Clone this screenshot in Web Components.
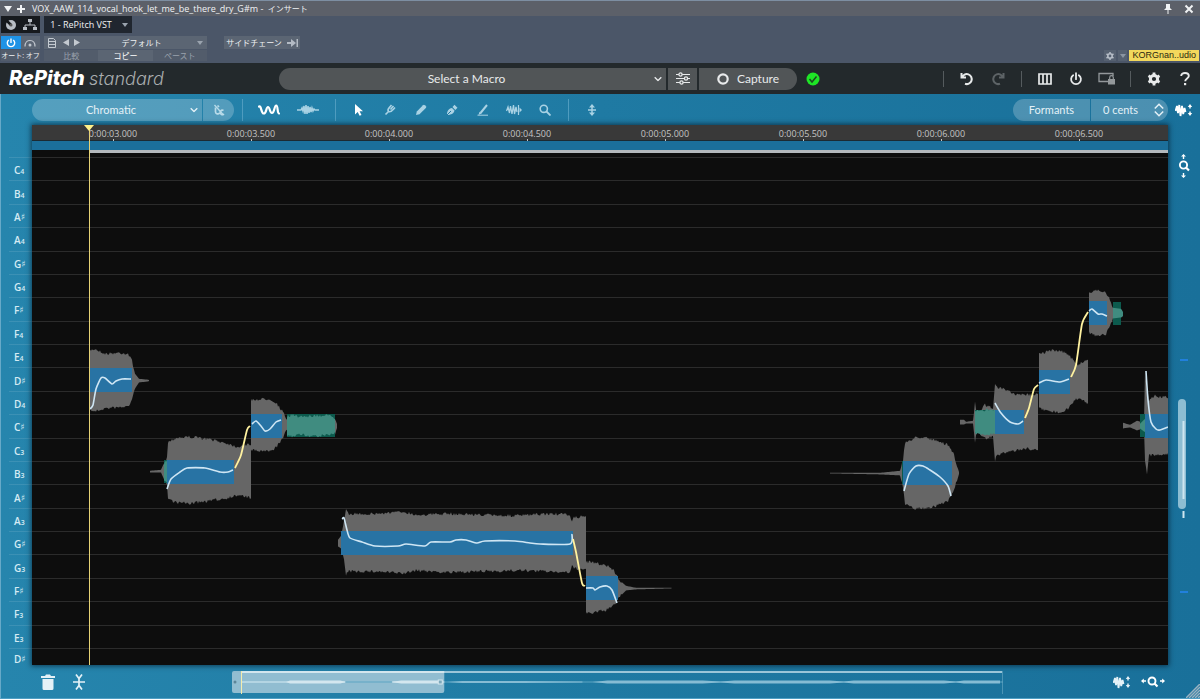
<!DOCTYPE html>
<html lang="ja">
<head>
<meta charset="utf-8">
<title>RePitch standard</title>
<style>
  body {
    margin: 0;
    height: 100vh;
    overflow: hidden;
    font-family: "Open Sans", "Noto Sans CJK JP", sans-serif;
  }
</style>
</head>
<body>
<repitch-app>
  <host-bar slot="host"></host-bar>
  <plugin-header slot="header"></plugin-header>
  <edit-toolbar slot="tools"></edit-toolbar>
  <note-keys slot="keys"></note-keys>
  <pitch-editor slot="editor"></pitch-editor>
  <zoom-rail slot="rail"></zoom-rail>
  <overview-bar slot="overview"></overview-bar>
</repitch-app>

<script>
const ICONS = {
  triangle: [8, 6, `<path d="M0 0h8L4 6z" fill="currentColor"/>`],
  triSmall: [6, 4, `<path d="M0 0h6L3 4z" fill="currentColor"/>`],
  triLeft: [6, 7, `<path d="M6 0v7L0 3.500z" fill="currentColor"/>`],
  triRight: [6, 7, `<path d="M0 0v7l6-3.500z" fill="currentColor"/>`],
  plus: [10, 10, `<path d="M5 1v8M1 5h8" stroke="currentColor" stroke-width="2"/>`],
  pin: [8, 10, `<path d="M2 0h4v4l2 2H0l2-2zM3.500 6h1v4h-1z" fill="currentColor"/>`],
  close: [10, 10, `<path d="M1.500 1.500l7 7M8.500 1.500l-7 7" stroke="currentColor" stroke-width="2"/>`],
  knob: [12, 12, `<circle cx="6" cy="6" r="5" fill="currentColor"/><path d="M6 6L1 1" stroke="#15181b" stroke-width="2.500"/><circle cx="6" cy="6" r="1.500" fill="#555"/>`],
  tree: [14, 12, `<path d="M7 2v4M2 9V6h10v3" fill="none" stroke="currentColor"/><path d="M5 0h4v3H5zM0 8h4v3H0zM10 8h4v3h-4z" fill="currentColor"/>`],
  powerSmall: [10, 10, `<path d="M2.800 2a3.700 3.700 0 1 0 4.400 0M5 .4v4.600" fill="none" stroke="currentColor" stroke-width="1.400"/>`],
  power: [14, 14, `<path d="M4.200 3.200a4.900 4.900 0 1 0 5.600 0M7 1.200v6" fill="none" stroke="currentColor" stroke-width="1.800" stroke-linecap="round"/>`],
  bypass: [12, 8, `<path d="M1 7.500C1 3 3.500 1.500 6 1.500S11 3 11 7.500" fill="none" stroke="currentColor" stroke-width="1.200"/><circle cx="6" cy="6" r="1.500" fill="currentColor"/>`],
  sheet: [8, 10, `<path d="M.5.5h5l2 2v7h-7zM1 3.500h6M1 6.500h6" fill="none" stroke="currentColor"/>`],
  routeIn: [11, 8, `<path d="M0 3h4V0l5 4-5 4V5H0zM9.500 0H11v8H9.500z" fill="currentColor"/>`],
  chevron: [8, 5, `<path d="M.7.7L4 4 7.300.7" fill="none" stroke="currentColor" stroke-width="1.300"/>`],
  sliders: [14, 13, `<path d="M0 2.500h14M0 6.500h14M0 10.500h14" stroke="currentColor" stroke-width="1.200"/><g fill="#515557" stroke="currentColor" stroke-width="1.300"><circle cx="4.500" cy="2.500" r="1.600"/><circle cx="10" cy="6.500" r="1.600"/><circle cx="5.500" cy="10.500" r="1.600"/></g>`],
  ring: [12, 12, `<circle cx="6" cy="6" r="4.700" fill="none" stroke="currentColor" stroke-width="2.200"/>`],
  check: [14, 14, `<circle cx="7" cy="7" r="6.500" fill="#1ee526"/><path d="M3.500 7l2.500 3 4.500-5.500" fill="none" stroke="#1b4a20" stroke-width="1.500"/>`],
  undo: [14, 14, `<path d="M1.500 1v4.500H6M2 5.500A5 5 0 1 1 5 11.800" fill="none" stroke="currentColor" stroke-width="2"/>`],
  redo: [14, 14, `<path d="M12.500 1v4.500H8M12 5.500A5 5 0 1 0 9 11.800" fill="none" stroke="currentColor" stroke-width="2"/>`],
  columns: [14, 12, `<path d="M1 1h12v10H1zM5 1v10M9 1v10" fill="none" stroke="currentColor" stroke-width="1.700"/>`],
  screenLock: [18, 13, `<path d="M10 9.500H1V1.500h14V4" fill="none" stroke="currentColor" stroke-width="1.300"/><path d="M10 7h7v5.500h-7z" fill="currentColor"/><path d="M11.700 7V5.500a1.800 1.800 0 0 1 3.600 0V7" fill="none" stroke="currentColor" stroke-width="1.200"/>`],
  gear: [14, 14, `<circle cx="7" cy="7" r="3.600" fill="none" stroke="currentColor" stroke-width="3"/><path d="M7 .6v2.500M7 10.900v2.500M1.500 3.800l2.200 1.300M10.300 8.900l2.200 1.300M1.500 10.200l2.200-1.300M10.300 5.100l2.200-1.300" stroke="currentColor" stroke-width="2.800"/>`],
  gearSmall: [8, 8, `<circle cx="4" cy="4" r="2.200" fill="none" stroke="currentColor" stroke-width="1.600"/><path d="M4 0v1.600M4 6.400V8M.5 2l1.400.8M6.100 5.200l1.400.8M.5 6l1.400-.8M6.100 2.800L7.500 2" stroke="currentColor" stroke-width="1.500"/>`],
  help: [10, 14, `<path d="M1.200 4C1.200 2 2.800 1 5 1s3.800 1 3.800 3c0 2.400-3.600 2.500-3.600 5.200" fill="none" stroke="currentColor" stroke-width="1.900"/><path d="M4 11h2.200v2.200H4z" fill="currentColor"/>`],
  scaleOff: [12, 12, `<path d="M1.500 1l9 10" stroke="currentColor" stroke-width="1.300"/><path d="M2.500 3.500v4.500a2.200 2.200 0 0 0 4 1M4.500 1.500L6 3M10.500 6.500a2.200 2.200 0 1 0 .5 3.500" fill="none" stroke="currentColor" stroke-width="1.700"/>`],
  pitchWave: [22, 12, `<path d="M1 2.500C3.500 1.500 3 9.500 5.800 9.500S8 3 10 3s1.500 6 4 6 2.200-7.500 4.200-7.500S19 9 21 9.500" fill="none" stroke="currentColor" stroke-width="2.200" stroke-linecap="round"/>`],
  audioWave: [22, 12, `<path d="M0 6h4l1-2 1 3 1-5 1 8 1-9 1 9 1-8 1 7 1-6 1 5 1-4 1 3 1-2 1 1h5" fill="none" stroke="currentColor" stroke-width="1.500"/>`],
  pointer: [10, 12, `<path d="M1 0v10.500l2.700-2.400 1.900 3.700 1.900-.9-1.900-3.600H9z" fill="currentColor"/>`],
  fork: [12, 12, `<path d="M1.500 10.500L5 7M4.500 7.500C2.500 5 5.500 4 7.500 1M4.500 7.500c2.500 1.500 4-1.500 6.500-4M6.500 5.500l3-3.500" fill="none" stroke="currentColor" stroke-width="1.600"/>`],
  pencil: [12, 12, `<path d="M1 11l.8-3.500L8 1.300a1.300 1.300 0 0 1 1.800 0l1 1a1.300 1.300 0 0 1 0 1.800L4.500 10.300z" fill="currentColor"/>`],
  pen: [12, 12, `<path d="M1 11C1 7 2.500 4.500 6 4l2.500 2.500C8 9.500 5 11 1 11zM6.500 3L8.500.8l3 3L9.300 6z" fill="currentColor"/><path d="M1 11l4-4" stroke="#2079a3"/>`],
  line: [12, 12, `<path d="M3.500 9L10 1" stroke="currentColor" stroke-width="2"/><path d="M.5 11.200h10.500" stroke="currentColor"/><path d="M2.500 7.800l2 1.700L1.500 11z" fill="currentColor"/>`],
  stretch: [16, 12, `<path d="M.5 7L2 3l1.500 6 1-7 1.500 8L7.500 1l1 9L10 3l1 5" fill="none" stroke="currentColor" stroke-width="1.300"/><path d="M12.500 1v10" stroke="currentColor" stroke-width="1.200"/><path d="M13.500 3.500L16 6l-2.500 2.500z" fill="currentColor"/>`],
  search: [12, 12, `<circle cx="4.800" cy="4.800" r="3.600" fill="none" stroke="currentColor" stroke-width="1.600"/><path d="M7.500 7.500l4 4" stroke="currentColor" stroke-width="1.800"/>`],
  pitchSnap: [8, 12, `<path d="M4 1v10M0 6h8" stroke="currentColor" stroke-width="1.500"/><path d="M4 0l3 3.500H1zM4 12l3-3.500H1z" fill="currentColor"/>`],
  stepper: [10, 14, `<path d="M.8 5.500L5 1.200l4.200 4.300M.8 8.500L5 12.800l4.200-4.300" fill="none" stroke="currentColor" stroke-width="1.500"/>`],
  waveHeight: [18, 14, `<path d="M.5 8L2 3l1 7L4.300 2l1.200 11L7 3l1.200 8L9.500 5l1 4" fill="none" stroke="currentColor" stroke-width="1.800"/><path d="M15 1l2.200 3h-1.500v1.500h-1.400V4h-1.500zM15 13l2.200-3h-1.500V8.500h-1.400V10h-1.500z" fill="currentColor"/>`],
  zoomVertical: [12, 24, `<circle cx="5.500" cy="11" r="3.600" fill="none" stroke="currentColor" stroke-width="1.900"/><path d="M8 13.500l3 3" stroke="currentColor" stroke-width="2.200"/><path d="M5.500 0L8 2.500H6.200V5H4.800V2.500H3zM5.500 24L8 21.500H6.200V19H4.800v2.500H3z" fill="currentColor"/>`],
  zoomHorizontal: [24, 12, `<circle cx="11" cy="5" r="3.500" fill="none" stroke="currentColor" stroke-width="1.900"/><path d="M13.500 7.500l3 3" stroke="currentColor" stroke-width="2.200"/><path d="M0 5l2.800-2.500v1.800H5v1.400H2.800v1.800zM24 5l-2.800-2.500v1.800H19v1.400h2.200v1.800z" fill="currentColor"/>`],
  trash: [14, 16, `<path d="M0 2h4l1-1.500h4L10 2h4v2H0zM1.500 5h11v9.500a1.500 1.500 0 0 1-1.500 1.500H3a1.500 1.500 0 0 1-1.500-1.500z" fill="currentColor"/>`],
  collapse: [12, 16, `<path d="M0 8h12M3 .5L6 4.500 9 .5M6 4v8M3 15.500l3-4 3 4" fill="none" stroke="currentColor" stroke-width="1.700"/>`],
  grip: [14, 14, `<path d="M0 14L14 0M3 14L14 3M6 14l8-8M9 14l5-5M12 14l2-2" stroke="#9bb3c2" stroke-width="1.500"/>`]
};

class RpIcon extends HTMLElement {
  constructor() {
    super();
    this.attachShadow({ mode: "open" });
  }

  connectedCallback() {
    const [w, h, body] = ICONS[this.getAttribute("name")];
    this.shadowRoot.innerHTML = `
      <style>
        :host { display: inline-flex; flex: none; pointer-events: none; }
        svg { display: block; }
      </style>
      <svg width="${w}" height="${h}" viewBox="0 0 ${w} ${h}" aria-hidden="true">${body}</svg>`;
  }
}
customElements.define("rp-icon", RpIcon);

// rules every element with controls starts from
const RESET = `
  * { box-sizing: border-box; }
  button, select, input {
    margin: 0; padding: 0; border: 0; border-radius: 0;
    background: none; color: inherit; font: inherit;
    appearance: none; cursor: pointer; min-width: 0;
  }
  button { display: flex; align-items: center; justify-content: center; white-space: nowrap; }
  select { text-align-last: center; }
  .pick { position: relative; display: flex; }
  .pick select { flex: 1; }
  .pick rp-icon { position: absolute; right: 4px; top: 50%; transform: translateY(-50%); }
`;

function define(name, html) {
  const template = document.createElement("template");
  template.innerHTML = html;
  customElements.define(name, class extends HTMLElement {
    constructor() {
      super();
      this.attachShadow({ mode: "open" });
      this.shadowRoot.appendChild(template.content.cloneNode(true));
      if (this.shadowRoot.querySelector("svg[data-draw]")) draw(this.shadowRoot);
    }
  });
}

define("host-bar", `
  <style>
    ${RESET}
    :host { display: block; background: #4b5668; color: #f0f2f4; font-size: 9px; line-height: 11px; border-top: 1px solid #7d8ea2; }
    .title { display: flex; align-items: center; gap: 4px; height: 15px; padding: 0 3px 0 4px; background: #5c6069; }
    .title span { flex: 1; padding-left: 2px; }
    .title button { width: 17px; }
    .jp { font-size: 8px; }
    .body { display: flex; height: 47px; padding-left: 1px; }
    .col { display: grid; grid-template-rows: 17px 1px 13px 11px; row-gap: 1px; }
    .row { display: flex; }
    .row > * { flex: 1; }
    .left { width: 39px; margin-right: 4px; }
    .dark { background: #16191d; color: #b9bec5; }
    .on { background: #1f93e6; color: #fff; }
    .grey { background: #5b6573; color: #c3c9d0; }
    .soft { background: #525c6b; color: #9aa2ad; }
    .auto { background: #525c6b; font-size: 7px; }
    .preset { width: 163px; margin-right: 17px; }
    .preset .row { font-size: 8px; }
    .tab { width: 88px; background: #20262f; }
    .tab select { padding-right: 14px; }
    .pick rp-icon { color: #9aa3ae; }
    .preset .page { flex: 0 0 16px; }
    .preset .step { flex: 0 0 11px; }
    .preset .name { color: #f0f2f4; }
    .name select { padding-right: 6px; }
    .copy { background: #5b6573; color: #fff; }
    .side { width: 76px; gap: 5px; background: #5b6573; font-size: 8px; }
    .side rp-icon { color: #b4bbc4; }
    .right { display: flex; align-items: flex-end; gap: 2px; margin-left: auto; padding: 0 1px 2px 0; }
    .right button { height: 11px; width: 12px; background: #566171; color: #b7bec8; }
    .right .more { width: 9px; color: #8b95a2; }
    .user { padding: 0 3px; background: #f3d85c; color: #2b2710; font-family: "Liberation Sans", sans-serif; }
  </style>
  <div class="title">
    <rp-icon name="triangle"></rp-icon><rp-icon name="plus"></rp-icon>
    <span>VOX_AAW_114_vocal_hook_let_me_be_there_dry_G#m - <span class="jp">インサート</span></span>
    <button aria-label="Pin"><rp-icon name="pin"></rp-icon></button>
    <button aria-label="Close"><rp-icon name="close"></rp-icon></button>
  </div>
  <div class="body">
    <div class="col left">
      <div class="row dark">
        <button aria-label="Control"><rp-icon name="knob"></rp-icon></button>
        <button aria-label="Routing"><rp-icon name="tree"></rp-icon></button>
      </div>
      <span></span>
      <div class="row">
        <button class="on" aria-label="Power"><rp-icon name="powerSmall"></rp-icon></button>
        <button class="grey" aria-label="Bypass"><rp-icon name="bypass"></rp-icon></button>
      </div>
      <button class="auto">オート: オフ</button>
    </div>
    <div class="col preset">
      <label class="pick tab"><select aria-label="Plug-in"><option>1 - RePitch VST</option></select><rp-icon name="triSmall"></rp-icon></label>
      <span></span>
      <div class="row grey">
        <button class="page" aria-label="Presets"><rp-icon name="sheet"></rp-icon></button>
        <button class="step" aria-label="Previous"><rp-icon name="triLeft"></rp-icon></button>
        <button class="step" aria-label="Next"><rp-icon name="triRight"></rp-icon></button>
        <label class="pick name"><select aria-label="Preset"><option>デフォルト</option></select><rp-icon name="triSmall"></rp-icon></label>
      </div>
      <div class="row">
        <button class="soft">比較</button><button class="copy">コピー</button><button class="soft">ペースト</button>
      </div>
    </div>
    <div class="col">
      <span></span><span></span>
      <button class="side">サイドチェーン<rp-icon name="routeIn"></rp-icon></button>
    </div>
    <div class="right">
      <button aria-label="Options"><rp-icon name="gearSmall"></rp-icon></button>
      <button class="more" aria-label="More"><rp-icon name="triSmall"></rp-icon></button>
      <span class="user">KORGnan..udio</span>
    </div>
  </div>
`);

define("plugin-header", `
  <style>
    ${RESET}
    :host { display: flex; align-items: center; height: 31px; background: #23292c; color: #e8eaeb; font-size: 12px; font-family: Lato, sans-serif; }
    h1 { flex: 0 0 279px; margin: 0; padding-left: 9px; font: italic 800 20px/24px Inter, sans-serif; color: #fff; }
    h1 span { font-size: 18px; font-weight: 300; color: #a9adaf; }
    .group { flex: 1; display: flex; gap: 2px; height: 22px; }
    .group > * { background: #515557; }
    .pick { flex: 1; border-radius: 11px 0 0 11px; }
    .pick select { padding-right: 12px; }
    .adjust { width: 29px; }
    .capture { width: 98px; gap: 8px; border-radius: 0 11px 11px 0; }
    .status { display: flex; margin: 0 115px 0 9px; }
    .tool { width: 31px; height: 24px; }
    .tool[disabled] { color: #5d6366; }
    .lock { color: #93989b; }
    .sep { width: 16px; height: 16px; background: linear-gradient(#555b5e, #555b5e) center / 1px 100% no-repeat; }
  </style>
  <h1>RePitch <span>standard</span></h1>
  <div class="group">
    <label class="pick"><select aria-label="Macro"><option>Select a Macro</option></select><rp-icon name="chevron"></rp-icon></label>
    <button class="adjust" aria-label="Macro settings"><rp-icon name="sliders"></rp-icon></button>
    <button class="capture"><rp-icon name="ring"></rp-icon>Capture</button>
  </div>
  <div class="status"><rp-icon name="check"></rp-icon></div>
  <span class="sep"></span>
  <button class="tool" aria-label="Undo"><rp-icon name="undo"></rp-icon></button>
  <button class="tool" aria-label="Redo" disabled><rp-icon name="redo"></rp-icon></button>
  <span class="sep"></span>
  <button class="tool" aria-label="Columns"><rp-icon name="columns"></rp-icon></button>
  <button class="tool" aria-label="Power"><rp-icon name="power"></rp-icon></button>
  <button class="tool lock" aria-label="Lock view"><rp-icon name="screenLock"></rp-icon></button>
  <span class="sep"></span>
  <button class="tool" aria-label="Settings"><rp-icon name="gear"></rp-icon></button>
  <button class="tool" aria-label="Help"><rp-icon name="help"></rp-icon></button>
`);

define("edit-toolbar", `
  <style>
    ${RESET}
    :host { display: flex; align-items: center; height: 31px; padding-left: 32px; color: #e4f1f7; font-size: 11px; font-family: Lato, sans-serif; }
    .pill { display: flex; gap: 1px; height: 22px; }
    .pill > * { background: rgba(255, 255, 255, .22); }
    .pill > :first-child { border-radius: 11px 0 0 11px; }
    .pill > :last-child { border-radius: 0 11px 11px 0; }
    .scale { width: 170px; }
    .scale select { padding-right: 12px; }
    .snap { width: 31px; color: #b9dbe9; }
    .sep { width: 16px; height: 22px; background: linear-gradient(#4f9cbf, #4f9cbf) center / 1px 100% no-repeat; }
    .mode { width: 38px; height: 24px; color: #a9d2e4; }
    .mode + .mode { margin-left: 1px; }
    .tool { width: 31px; height: 24px; color: #a9d2e4; }
    .on { color: #fff; }
    .right { display: flex; align-items: center; margin-left: auto; }
    .formants { width: 77px; }
    .cents { display: flex; width: 77px; }
    .cents input { flex: 1; width: 59px; text-align: center; }
    .cents button { width: 18px; }
    .height { width: 32px; height: 24px; color: #fff; }
  </style>
  <div class="pill">
    <label class="pick scale"><select aria-label="Scale"><option>Chromatic</option></select><rp-icon name="chevron"></rp-icon></label>
    <button class="snap" aria-label="Tuning"><rp-icon name="scaleOff"></rp-icon></button>
  </div>
  <span class="sep"></span>
  <button class="mode on" aria-label="Pitch"><rp-icon name="pitchWave"></rp-icon></button>
  <button class="mode" aria-label="Audio"><rp-icon name="audioWave"></rp-icon></button>
  <span class="sep"></span>
  <button class="tool on" aria-label="Select"><rp-icon name="pointer"></rp-icon></button>
  <button class="tool" aria-label="Tune"><rp-icon name="fork"></rp-icon></button>
  <button class="tool" aria-label="Pencil"><rp-icon name="pencil"></rp-icon></button>
  <button class="tool" aria-label="Pen"><rp-icon name="pen"></rp-icon></button>
  <button class="tool" aria-label="Line"><rp-icon name="line"></rp-icon></button>
  <button class="tool" aria-label="Stretch"><rp-icon name="stretch"></rp-icon></button>
  <button class="tool" aria-label="Zoom"><rp-icon name="search"></rp-icon></button>
  <span class="sep"></span>
  <button class="tool" aria-label="Snap pitch"><rp-icon name="pitchSnap"></rp-icon></button>
  <div class="right">
    <div class="pill">
      <button class="formants">Formants</button>
      <div class="cents">
        <input aria-label="Formant shift" value="0 cents">
        <button aria-label="Step"><rp-icon name="stepper"></rp-icon></button>
      </div>
    </div>
    <button class="height" aria-label="Wave height"><rp-icon name="waveHeight"></rp-icon></button>
  </div>
`);

const NOTES = "C4 B4 A♯ A4 G♯ G4 F♯ F4 E4 D♯ D4 C♯ C3 B3 A♯ A3 G♯ G3 F♯ F3 E3 D♯".split(" ");

define("note-keys", `
  <style>
    :host { display: grid; grid-template-rows: repeat(21, 1fr) 17px; padding: 32px 0 0 8px; color: #d5ebf4; font-size: 10px; line-height: 12px; font-weight: 600; }
    div { display: flex; align-items: center; padding: 2px 0 0 5px; border-top: 1px solid rgba(255, 255, 255, .1); min-height: 0; }
    small { font-size: 7px; line-height: 8px; padding-top: 4px; }
    i { font: 9px/12px "DejaVu Sans", sans-serif; }
    div:last-child { align-items: flex-end; padding-top: 0; }
  </style>
  ${NOTES.map(n => /\d/.test(n) ? `<div>${n[0]}<small>${n[1]}</small></div>` : `<div>${n[0]}<i>♯</i></div>`).join("")}
`);

define("pitch-editor", `
  <style>
    :host { position: relative; display: flex; flex-direction: column; min-width: 0; background: #0d0d0d; box-shadow: 0 0 5px 1px rgba(0, 20, 35, .65); }
    .ruler { display: grid; grid-template-columns: repeat(8, 1fr); height: 15px; padding: 0 20px 0 12px; background: #393939; border-bottom: 1px solid #1c2a32; color: #c4c4c4; font: 9px/17px "Open Sans", sans-serif; }
    .ruler span { text-align: center; background: linear-gradient(#c4c4c4, #c4c4c4) center bottom / 1px 3px no-repeat; }
    .clip { height: 9px; background: #1b6f9b; }
    .region { height: 3px; margin-left: 57px; background: #b4b9bd; }
    .canvas { flex: 1; min-height: 0; }
    svg { display: block; width: 100%; height: 100%; }
    .playhead { position: absolute; left: 57px; top: 0; bottom: 0; width: 1px; background: #e6d275; }
    .playhead::before { content: ""; position: absolute; left: -5px; border: 5px solid transparent; border-width: 6px 5px 0; border-top-color: #fff08a; }
  </style>
  <div class="ruler">
    ${["03.000", "03.500", "04.000", "04.500", "05.000", "05.500", "06.000", "06.500"].map(t => `<span>0:00:${t}</span>`).join("")}
  </div>
  <div class="clip"></div>
  <div class="region"></div>
  <div class="canvas"><svg data-draw viewBox="32 153 1136 512" preserveAspectRatio="none"></svg></div>
  <div class="playhead"></div>
`);

define("zoom-rail", `
  <style>
    ${RESET}
    :host { display: flex; flex-direction: column; align-items: center; padding-top: 29px; color: #fff; }
    button { width: 28px; height: 24px; }
    .track { flex: 1; width: 16px; min-height: 0; }
    svg { display: block; width: 100%; height: 100%; }
  </style>
  <button aria-label="Zoom vertically"><rp-icon name="zoomVertical"></rp-icon></button>
  <div class="track">
    <svg viewBox="0 178 16 487" preserveAspectRatio="none">
      <rect x="4" y="359" width="8" height="2" fill="#2180dc"/>
      <rect x="4" y="591" width="8" height="2" fill="#2180dc"/>
      <rect x="2" y="399" width="8" height="110" rx="4" fill="#8dbdd2"/>
      <path d="M7.500 421v78M7.500 511v7" stroke="#cfe6f0" stroke-width="2"/>
    </svg>
  </div>
`);

define("overview-bar", `
  <style>
    ${RESET}
    :host { display: flex; align-items: center; height: 32px; padding: 1px 0 0 32px; color: #e4f1f7; }
    button { width: 31px; height: 24px; }
    .map { flex: 1; height: 23px; margin: 0 103px 0 138px; }
    svg { display: block; width: 100%; height: 100%; }
    .end { width: 32px; color: #fff; }
    .grip { align-self: flex-end; display: flex; width: 31px; justify-content: flex-end; }
  </style>
  <button aria-label="Delete"><rp-icon name="trash"></rp-icon></button>
  <button aria-label="Collapse"><rp-icon name="collapse"></rp-icon></button>
  <div class="map">
    <svg viewBox="232 671 770 23" preserveAspectRatio="none">
      <path d="M241 672h761" stroke="#9cc7da" stroke-width="2"/>
      <path d="M1001.500 671v23" stroke="#4b94b5"/>
      <rect x="232" y="671" width="212" height="22" rx="2" fill="#91bdd1"/>
      <path d="M241 672h203" stroke="#d4e7ef" stroke-width="2"/>
      <path d="M241 682h761" stroke="#5fa5c3"/>
      <path d="M241 682h104M392 682h52" stroke="#c9e1eb" stroke-width="1.500"/>
      <path d="M286 682l4-1.500h50l6 1.500-6 1.500h-50zM391 682l10-1.500h40v3h-40z" fill="#d4e7ef"/>
      <path d="M447 682l15-1h60l60 .5v1l-60 .5h-60zM592 682l15-1.500h95l18 1 14-1h95l14 1 10-1h90l12 1 8-1h36v3h-36l-8-1-12 1h-90l-10-1-14 1h-95l-14-1-18 1h-95z" fill="#86bcd4"/>
      <circle cx="235" cy="682" r="1.500" fill="#5c8598"/>
      <rect x="438" y="680" width="4" height="4" fill="#7ba8bb" stroke="#d4e7ef"/>
      <path d="M241.500 671v23" stroke="#f3ecae"/>
    </svg>
  </div>
  <button aria-label="Wave height"><rp-icon name="waveHeight"></rp-icon></button>
  <button class="end" aria-label="Zoom horizontally"><rp-icon name="zoomHorizontal"></rp-icon></button>
  <div class="grip"><rp-icon name="grip"></rp-icon></div>
`);

define("repitch-app", `
  <style>
    :host { display: flex; flex-direction: column; height: 100%; }
    main { flex: 1; min-height: 0; display: grid; grid-template: 31px 1fr 33px / 31px 1fr 32px; box-sizing: border-box;
      background: linear-gradient(90deg, #2685ad, #1f7aa3 50%, #19709a); border-left: 1px solid #67a9c8; border-bottom: 1px solid #4f9fc4; }
    .wide { grid-column: 1 / -1; display: grid; margin-left: -1px; }
    slot { display: contents; }
  </style>
  <slot name="host"></slot>
  <slot name="header"></slot>
  <main>
    <div class="wide"><slot name="tools"></slot></div>
    <slot name="keys"></slot>
    <slot name="editor"></slot>
    <slot name="rail"></slot>
    <div class="wide"><slot name="overview"></slot></div>
  </main>
`);

// [x, top, bottom] envelopes of the sung notes
function draw(root) {
  const waves = [
    [[89, 351, 409], [95, 349, 411], [105, 354, 408], [120, 353, 407], [128, 354, 406], [132, 361, 400], [135, 374, 388], [139, 379, 382], [149, 380, 381]],
    [[150, 471, 472], [161, 470, 472], [164, 463, 479], [167, 458, 485], [168, 442, 498], [176, 438, 502], [190, 437, 503], [212, 440, 500], [225, 443, 498], [237, 447, 495], [245, 445, 496], [251, 445, 498]],
    [[251, 400, 450], [270, 399, 451], [276, 403, 447], [283, 412, 438], [286, 419, 430], [291, 424, 427]],
    [[335, 419, 433], [337, 424, 428]],
    [[338, 540, 546], [341, 536, 548], [344, 522, 560], [346, 510, 575], [348, 514, 571], [375, 514, 571], [405, 512, 573], [415, 515, 570], [450, 514, 572], [515, 516, 570], [550, 514, 571], [570, 515, 572], [572, 522, 566], [574, 518, 568], [586, 516, 569]],
    [[586, 562, 613], [595, 563, 612], [608, 566, 609], [614, 571, 605], [619, 580, 597], [626, 586, 590], [636, 588, 589], [672, 588, 588]],
    [[830, 473, 473], [880, 473, 474], [900, 471, 475], [903, 461, 487], [905, 443, 504], [915, 438, 508], [925, 437, 508], [938, 442, 505], [948, 445, 500], [954, 455, 490], [957, 466, 480], [959, 472, 474]],
    [[960, 420, 424], [964, 420, 424], [966, 422, 423], [973, 421, 423], [975, 403, 441], [977, 414, 430], [985, 405, 438], [993, 408, 436], [995, 385, 460], [997, 388, 455], [1003, 389, 453], [1015, 395, 450], [1028, 395, 448], [1038, 394, 450]],
    [[1039, 354, 408], [1050, 351, 411], [1060, 351, 412], [1068, 354, 408], [1075, 363, 400], [1078, 365, 398], [1085, 361, 401], [1088, 360, 403]],
    [[1089, 293, 332], [1096, 290, 335], [1106, 293, 334], [1110, 300, 324], [1113, 308, 318]],
    [[1123, 423, 428], [1130, 425, 427], [1137, 421, 430], [1144, 423, 428], [1145, 372, 460], [1147, 390, 474], [1149, 400, 455], [1155, 396, 455], [1168, 398, 453]]
  ];
  const breaths = [
    [[164, 463, 479], [167, 460, 483]],
    [[287, 417, 434], [292, 415, 436], [300, 417, 434], [315, 416, 436], [330, 416, 434], [335, 419, 432]],
    [[975, 411, 433], [980, 410, 434], [995, 410, 434]],
    [[1113, 308, 318], [1121, 309, 317], [1123, 312, 316]],
    [[1140, 424, 428], [1145, 419, 432]]
  ];
  const breathBoxes = [[164, 460, 3], [287, 414, 48], [902, 461, 2], [975, 410, 20], [1113, 302, 8], [1140, 414, 5]];
  const notes = [[90, 368, 42], [167, 460, 67], [251, 414, 31], [341, 531, 232], [586, 576, 32], [903, 461, 49],
    [995, 410, 29], [1039, 370, 31], [1089, 301, 18], [1145, 414, 23]];
  const pitches = [
    [[90, 409], [93, 405], [96, 389], [101, 378], [105, 378], [112, 384], [116, 381], [122, 379], [131, 379]],
    [[167, 489], [171, 479], [180, 472], [187, 468], [205, 468], [220, 472], [228, 472], [233, 470]],
    [[252, 424], [256, 421], [261, 426], [265, 431], [270, 429], [276, 422], [281, 420]],
    [[342, 519], [344, 518], [347, 530], [350, 538], [362, 542], [375, 546], [398, 546], [406, 544], [425, 546], [431, 542], [450, 542], [456, 540], [466, 540], [477, 543], [485, 541], [515, 541], [530, 543], [540, 544], [570, 544], [572, 534]],
    [[586, 588], [593, 588], [595, 590], [600, 587], [607, 586], [612, 590], [617, 603]],
    [[904, 491], [909, 474], [916, 466], [923, 466], [930, 470], [940, 477], [948, 486], [951, 496]],
    [[995, 403], [1001, 413], [1010, 422], [1018, 424], [1023, 421]],
    [[1039, 383], [1046, 380], [1060, 382], [1069, 379]],
    [[1089, 311], [1092, 309], [1098, 314], [1102, 314], [1107, 316]],
    [[1146, 371], [1148, 400], [1151, 422], [1156, 429], [1160, 430], [1168, 427]]
  ];
  const glides = [
    [[235, 468], [241, 455], [247, 430], [250, 426]],
    [[573, 539], [576, 552], [582, 583], [585, 586]],
    [[1025, 418], [1029, 408], [1034, 389], [1038, 385]],
    [[1071, 377], [1076, 365], [1082, 324], [1088, 312]]
  ];

  let seed = 7;
  const noise = () => (seed = (seed * 16807) % 2147483647) / 2147483647;

  // walk an envelope in small steps and roughen its edges
  const wave = pts => {
    const top = [], bottom = [];
    for (let i = 0; i < pts.length - 1; i++) {
      const [x0, t0, b0] = pts[i], [x1, t1, b1] = pts[i + 1];
      for (let x = x0; x < x1; x++) {
        const k = (x - x0) / (x1 - x0);
        const t = t0 + (t1 - t0) * k, b = b0 + (b1 - b0) * k;
        const rough = b - t > 12 ? 3 : 0;
        const lift = noise() * rough - rough / 2, drop = noise() * rough - rough / 2;
        top.push(`${x} ${t + lift - 0.2}`);
        bottom.unshift(`${x} ${b + drop + 0.4}`);
      }
    }
    const [x, t, b] = pts[pts.length - 1];
    return `M${top.join("L")}L${x} ${t}L${x} ${b}L${bottom.join("L")}Z`;
  };

  const curve = pts => {
    let d = `M${pts[0].join(" ")}`;
    for (let i = 0; i < pts.length - 1; i++) {
      const a = pts[i - 1] || pts[i], b = pts[i], c = pts[i + 1], e = pts[i + 2] || c;
      d += `C${b[0] + (c[0] - a[0]) / 9} ${b[1] + (c[1] - a[1]) / 9} ${c[0] - (e[0] - b[0]) / 9} ${c[1] - (e[1] - b[1]) / 9} ${c[0]} ${c[1]}`;
    }
    return d;
  };

  let lines = "";
  for (let i = 0; i < 22; i++) {
    const y = Math.round(157 + i * 491 / 21) + 0.5;
    lines += `M32 ${y}H1168`;
  }

  root.querySelector("svg[data-draw]").innerHTML = `
    <path d="${lines}" stroke="#2b2b2b"/>
    <path d="${waves.map(wave).join("")}" fill="#666"/>
    ${breathBoxes.map(([x, y, w]) => `<rect x="${x}" y="${y}" width="${w}" height="23" fill="#0c5a4d"/>`).join("")}
    <path d="${breaths.map(wave).join("")}" fill="#408c80"/>
    ${notes.map(([x, y, w]) => `<rect x="${x}" y="${y}" width="${w}" height="24" fill="#2873a4"/>`).join("")}
    <path d="${pitches.map(curve).join("")}" fill="none" stroke="#cfe6f4" stroke-width="1.600" stroke-linejoin="round"/>
    <path d="${glides.map(curve).join("")}" fill="none" stroke="#fff2a0" stroke-width="1.800" stroke-linejoin="round"/>`;
}
</script>
</body>
</html>
